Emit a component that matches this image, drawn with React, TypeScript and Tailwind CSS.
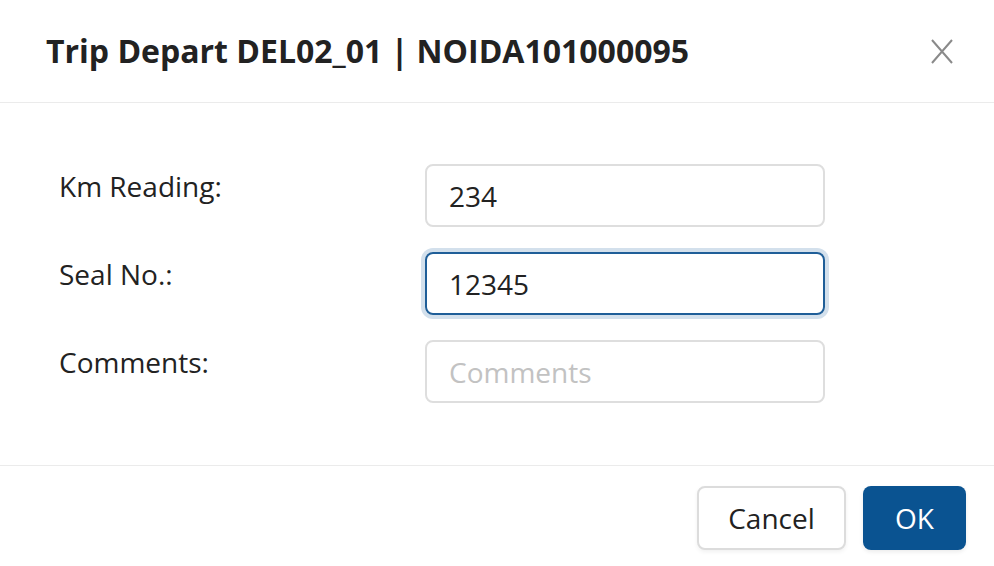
export default function App() {
  return (
    <div className="h-[566px] w-[994px] bg-white font-['Open_Sans',sans-serif] text-[#222]">
      <header className="flex h-[103px] items-center justify-between border-b border-[#ebebeb] pl-[46px] pr-[41px]">
        <h1 className="text-[32px] font-bold leading-none text-[#222]">Trip Depart DEL02_01 | NOIDA101000095</h1>
        <button type="button" className="text-[#8a8a8a]" aria-label="Close">
          <svg width="22" height="25" viewBox="0 0 22 25" fill="none" stroke="currentColor" strokeWidth="2">
            <path d="M1 1L21 24M21 1L1 24" />
          </svg>
        </button>
      </header>

      <div className="flex flex-col gap-[25px] pb-[62px] pl-[59px] pt-[61px]">
        <div className="flex items-start">
          <label className="mt-[1px] w-[366px] text-[28px] leading-[42px]">Km Reading:</label>
          <input
            defaultValue="234"
            className="h-[63px] w-[400px] rounded-[8px] border-2 border-[#dedede] px-[22px] text-[28px] outline-none"
          />
        </div>
        <div className="flex items-start">
          <label className="mt-[1px] w-[366px] text-[28px] leading-[42px]">Seal No.:</label>
          <input
            defaultValue="12345"
            className="h-[63px] w-[400px] rounded-[8px] border-2 border-[#1f5e98] px-[22px] text-[28px] shadow-[0_0_0_4px_#d3e0ec] outline-none"
          />
        </div>
        <div className="flex items-start">
          <label className="mt-[1px] w-[366px] text-[28px] leading-[42px]">Comments:</label>
          <input
            placeholder="Comments"
            className="h-[63px] w-[400px] rounded-[8px] border-2 border-[#dedede] px-[22px] text-[28px] outline-none placeholder:text-[#c2c2c2]"
          />
        </div>
      </div>

      <footer className="flex justify-end gap-[17px] border-t border-[#ebebeb] pr-[28px] pt-[20px]">
        <button
          type="button"
          className="h-[64px] w-[149px] rounded-[8px] border-2 border-[#dcdcdc] bg-white text-[28px] shadow-[0_2px_4px_rgba(0,0,0,0.06)]"
        >
          Cancel
        </button>
        <button
          type="button"
          className="h-[64px] w-[103px] rounded-[8px] bg-[#0a5391] text-[28px] text-white shadow-[0_2px_4px_rgba(0,0,0,0.08)]"
        >
          OK
        </button>
      </footer>
    </div>
  );
}
